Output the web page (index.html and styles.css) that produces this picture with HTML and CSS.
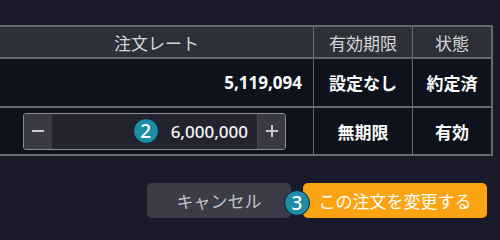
FILE: index.html
```html
<!DOCTYPE html>
<html lang="ja">
<head>
<meta charset="utf-8">
<link rel="stylesheet" href="styles.css">
</head>
<body>
<div class="page">
  <div class="grid">
    <div class="cell head">注文レート</div>
    <div class="cell head">有効期限</div>
    <div class="cell head last">状態</div>

    <div class="cell row1 num">5,119,094</div>
    <div class="cell row1 strong">設定なし</div>
    <div class="cell row1 strong last">約定済</div>

    <div class="cell row2 inputcell">
      <div class="stepper">
        <div class="step minus">
          <svg width="14" height="14" viewBox="0 0 14 14"><rect x="1" y="6" width="12" height="2" fill="#c9c9ce"/></svg>
        </div>
        <div class="value">
          <span class="badge">2</span>
          <span class="amount">6,000,000</span>
        </div>
        <div class="step plus">
          <svg width="14" height="14" viewBox="0 0 14 14"><rect x="1" y="6" width="12" height="2" fill="#c9c9ce"/><rect x="6" y="1" width="2" height="12" fill="#c9c9ce"/></svg>
        </div>
      </div>
    </div>
    <div class="cell row2 strong">無期限</div>
    <div class="cell row2 strong last">有効</div>
  </div>

  <div class="actions">
    <button class="btn cancel">キャンセル</button>
    <button class="btn confirm"><span class="badge badge3">3</span>この注文を変更する</button>
  </div>
</div>
</body>
</html>
```

FILE: styles.css
```css
* { box-sizing: border-box; }
html, body {
  margin: 0;
  padding: 0;
  width: 500px;
  height: 230px;
  overflow: hidden;
  background: #1a1a2b;
  font-family: "Noto Sans", "Noto Sans CJK JP", sans-serif;
}
.page {
  padding-top: 25px;
}
.grid {
  display: grid;
  grid-template-columns: 314px 99px 80px;
  grid-template-rows: 32px 49px 48px;
  width: 493px;
  border-top: 2px solid #66686e;
}
.cell {
  display: flex;
  align-items: center;
  justify-content: center;
  border-right: 1px solid #66686e;
  border-bottom: 2px solid #66686e;
  background: #0e121d;
  color: #fff;
  font-size: 17px;
}
.cell.last {
  border-right: 2px solid #66686e;
}
.head {
  background: #2d3038;
  color: #d6d6d8;
  font-weight: 400;
}
.num {
  justify-content: flex-end;
  padding-right: 11px;
  font-weight: 700;
  color: #fafafa;
}
.strong {
  font-weight: 700;
  color: #fafafa;
}
.inputcell {
  justify-content: flex-start;
  padding: 0 27px 0 23px;
}
.stepper {
  display: flex;
  width: 263px;
  height: 37px;
  border: 1px solid #8c8e94;
  border-radius: 3px;
  background: #22232e;
  overflow: hidden;
}
.step {
  width: 28px;
  flex: none;
  display: flex;
  align-items: center;
  justify-content: center;
  background: #393a45;
}
.plus {
  border-left: 1px solid #44454f;
}
.value {
  flex: 1;
  display: flex;
  align-items: center;
  justify-content: flex-end;
  gap: 12px;
  padding-right: 9px;
}
.amount {
  font-size: 17px;
  font-weight: 500;
  color: #f4f4f4;
}
.badge {
  width: 26px;
  height: 26px;
  border-radius: 50%;
  background: #1e8ca5;
  border: 1.5px solid #0a1f28;
  color: #fff;
  font-size: 19px;
  font-weight: 500;
  line-height: 1;
  display: flex;
  align-items: center;
  justify-content: center;
  flex: none;
}
.actions {
  display: flex;
  justify-content: flex-end;
  gap: 12px;
  width: 487px;
  margin-top: 27px;
}
.btn {
  height: 35px;
  border: none;
  border-radius: 5px;
  font-family: "Noto Sans", "Noto Sans CJK JP", sans-serif;
  font-size: 17px;
  padding: 0;
  display: flex;
  align-items: center;
  justify-content: center;
}
.cancel {
  width: 144px;
  background: #3b3c47;
  color: #c3c4c8;
}
.confirm {
  position: relative;
  width: 184px;
  background: #fba413;
  color: #fff;
}
.badge3 {
  position: absolute;
  left: -19px;
  top: 7px;
}
```
